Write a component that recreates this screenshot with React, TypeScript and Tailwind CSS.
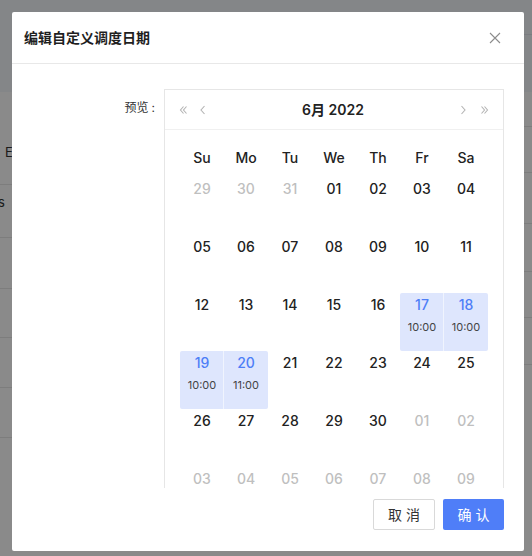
const font = { fontFamily: 'Inter, "Noto Sans CJK SC", "Liberation Sans", sans-serif' }

type Day = { d: string; muted?: boolean; time?: string }

const weeks: Day[][] = [
  [{ d: '29', muted: true }, { d: '30', muted: true }, { d: '31', muted: true }, { d: '01' }, { d: '02' }, { d: '03' }, { d: '04' }],
  [{ d: '05' }, { d: '06' }, { d: '07' }, { d: '08' }, { d: '09' }, { d: '10' }, { d: '11' }],
  [{ d: '12' }, { d: '13' }, { d: '14' }, { d: '15' }, { d: '16' }, { d: '17', time: '10:00' }, { d: '18', time: '10:00' }],
  [{ d: '19', time: '10:00' }, { d: '20', time: '11:00' }, { d: '21' }, { d: '22' }, { d: '23' }, { d: '24' }, { d: '25' }],
  [{ d: '26' }, { d: '27' }, { d: '28' }, { d: '29' }, { d: '30' }, { d: '01', muted: true }, { d: '02', muted: true }],
  [{ d: '03', muted: true }, { d: '04', muted: true }, { d: '05', muted: true }, { d: '06', muted: true }, { d: '07', muted: true }, { d: '08', muted: true }, { d: '09', muted: true }],
]

const weekdays = ['Su', 'Mo', 'Tu', 'We', 'Th', 'Fr', 'Sa']

function Chevron({ dir, double }: { dir: 'left' | 'right'; double?: boolean }) {
  const flip = dir === 'right' ? 'scale(-1,1) translate(-10,0)' : undefined
  return (
    <svg width="10" height="10" viewBox="0 0 10 10" fill="none" stroke="#b4b4b4" strokeWidth="1.1">
      <g transform={flip}>
        {double ? (
          <>
            <path d="M4.5 1.5 L1.5 5 L4.5 8.5" />
            <path d="M7.5 1.5 L4.5 5 L7.5 8.5" />
          </>
        ) : (
          <path d="M6.5 1 L3 5 L6.5 9" />
        )}
      </g>
    </svg>
  )
}

function BgRows({ lines }: { lines: number[] }) {
  // faint table rows of the page behind the dialog
  return (
    <div className="flex flex-col">
      {lines.map((h, i) => (
        <div key={i} className="border-b border-[#e8e8e8]" style={{ height: h }} />
      ))}
    </div>
  )
}

export default function App() {
  return (
    <div className="relative h-[556px] w-[532px] overflow-hidden bg-white" style={font}>
      {/* page behind */}
      <div className="flex h-full">
        <div className="w-[266px]">
          <div className="h-[92px] bg-[#f4f7fb]" />
          <div className="h-[93px] border-b border-[#e8e8e8] pt-[51px] text-[13px] leading-[18px] text-[#333]">
            <div className="pl-[5px]">E</div>
          </div>
          <div className="h-[53px] border-b border-[#e8e8e8] pt-[8px] text-[13px] leading-[18px] text-[#333]">
            <div className="-ml-[2px]">s</div>
          </div>
          <BgRows lines={[51, 49, 50, 50]} />
        </div>
        <div className="w-[266px]">
          <div className="h-[35px] border-b border-[#e2e6ec] bg-[#f4f7fb]" />
          <div className="h-[57px] bg-[#f4f7fb]" />
          <BgRows lines={[35, 46, 51, 48, 46, 47]} />
        </div>
      </div>

      {/* mask */}
      <div className="absolute inset-0 bg-[rgba(0,0,0,0.46)]" />

      {/* dialog */}
      <div className="absolute left-[12px] top-[12px] w-[512px] rounded-[2px] bg-white">
        <div className="flex h-[52px] items-center justify-between border-b border-[#e8e8e8] pl-[12px] pr-[23px]">
          <span className="text-[14px] font-semibold text-[#1f1f1f]">编辑自定义调度日期</span>
          <svg width="12" height="12" viewBox="0 0 12 12" stroke="#8c8c8c" strokeWidth="1.1">
            <path d="M1 1 L11 11 M11 1 L1 11" />
          </svg>
        </div>

        <div className="flex pt-[25px] pr-[20px]">
          <div className="w-[144px] pr-[1px] pt-[11px] text-right text-[12px] leading-[16px] text-[#333]">
            预览<span className="ml-[3px]">:</span>
          </div>
          <div className="ml-[8px] h-[399px] w-[340px] overflow-hidden">
            <div className="border border-[#e6e6e6]">
              <div className="flex h-[40px] items-center border-b border-[#f0f0f0] px-[14px]">
                <div className="flex items-center gap-[9px]">
                  <Chevron dir="left" double />
                  <Chevron dir="left" />
                </div>
                <div className="flex-1 text-center text-[14px] font-semibold text-[#222]">6月 2022</div>
                <div className="flex items-center gap-[11px]">
                  <Chevron dir="right" />
                  <Chevron dir="right" double />
                </div>
              </div>
              <div className="px-[15px]">
                <div className="grid h-[47px] grid-cols-7 pt-[18px]">
                  {weekdays.map((w) => (
                    <div key={w} className="text-center text-[14px] font-medium leading-[20px] text-[#222]">
                      {w}
                    </div>
                  ))}
                </div>
                {weeks.map((row, ri) => (
                  <div key={ri} className="grid grid-cols-7">
                    {row.map((c, ci) => {
                      const hl = !!c.time
                      const nextHl = hl && row[ci + 1]?.time
                      return (
                        <div
                          key={ci}
                          className={`h-[58px] pt-[4px] text-center ${hl ? 'bg-[#dee6fd]' : ''} ${
                            hl && !row[ci - 1]?.time ? 'rounded-l-[2px]' : ''
                          } ${hl && !nextHl ? 'rounded-r-[2px]' : ''} ${
                            nextHl ? 'shadow-[inset_-1px_0_0_rgba(255,255,255,0.55)]' : ''
                          }`}
                        >
                          <div
                            className={`text-[14px] font-medium leading-[16px] ${
                              hl ? 'text-[#4d7ef7]' : c.muted ? 'text-[#bfbfbf]' : 'text-[#222]'
                            }`}
                          >
                            {c.d}
                          </div>
                          {c.time && <div className="mt-[6px] text-[11px] leading-[16px] text-[#444]">{c.time}</div>}
                        </div>
                      )
                    })}
                  </div>
                ))}
              </div>
            </div>
          </div>
        </div>

        <div className="flex justify-end gap-[8px] pb-[21px] pr-[20px] pt-[11px]">
          <button className="h-[31px] w-[62px] rounded-[2px] border border-[#d9d9d9] bg-white pl-[4px] text-[14px] tracking-[4px] text-[#333]">
            取消
          </button>
          <button className="h-[31px] w-[61px] rounded-[2px] bg-[#4f7ef8] pl-[4px] text-[14px] tracking-[4px] text-white">
            确认
          </button>
        </div>
      </div>
    </div>
  )
}
